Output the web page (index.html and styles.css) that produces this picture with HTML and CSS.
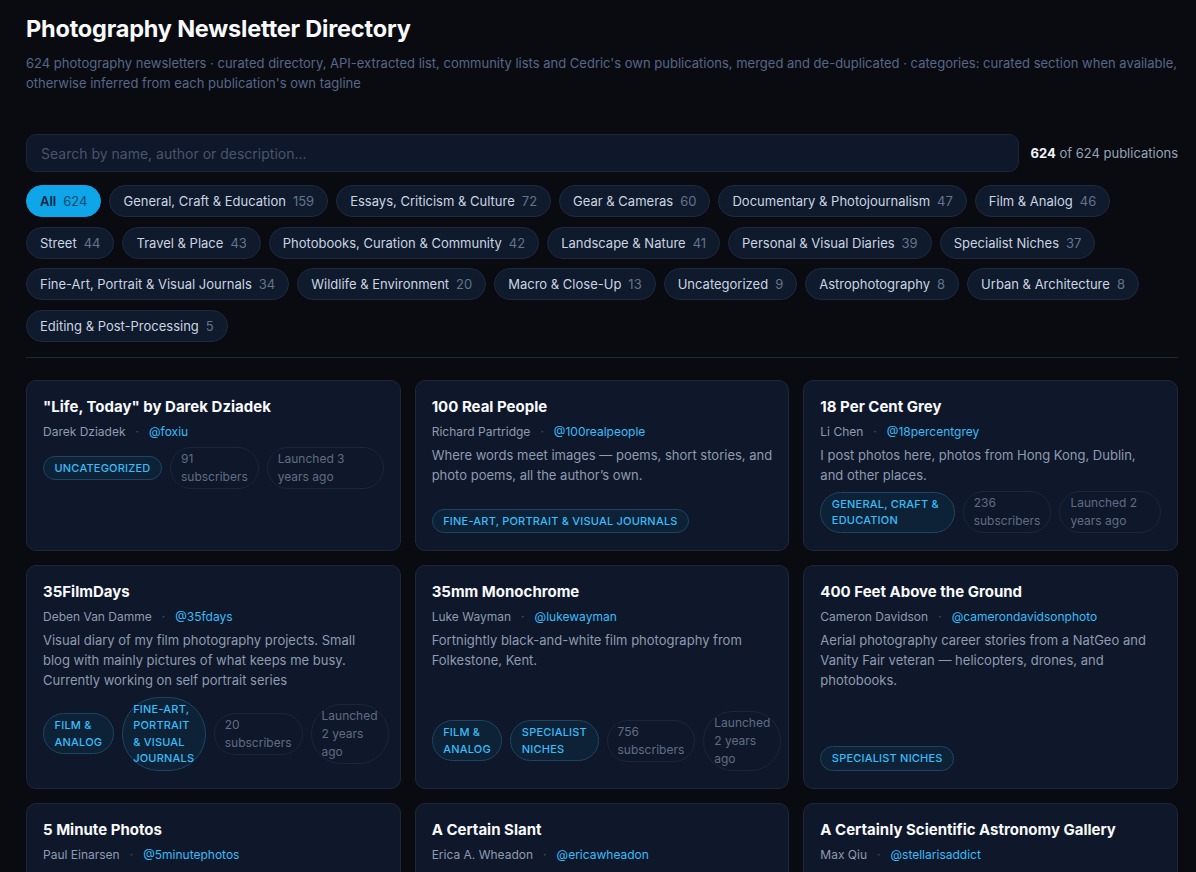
FILE: index.html
```html
<!DOCTYPE html>
<html lang="en">
<head>
<meta charset="utf-8">
<title>Photography Newsletter Directory</title>
<link rel="stylesheet" href="styles.css">
</head>
<body>
<div class="page">
  <header class="head">
    <h1 class="title">Photography Newsletter Directory</h1>
    <p class="subtitle">624 photography newsletters · curated directory, API-extracted list, community lists and Cedric's own publications, merged and de-duplicated · categories: curated section when available, otherwise inferred from each publication's own tagline</p>
  </header>

  <div class="searchbar">
    <div class="search">Search by name, author or description...</div>
    <div class="count"><b>624</b> of 624 publications</div>
  </div>

  <div class="chips">
    <span class="chip active">All <span class="n">624</span></span>
    <span class="chip">General, Craft &amp; Education <span class="n">159</span></span>
    <span class="chip">Essays, Criticism &amp; Culture <span class="n">72</span></span>
    <span class="chip">Gear &amp; Cameras <span class="n">60</span></span>
    <span class="chip">Documentary &amp; Photojournalism <span class="n">47</span></span>
    <span class="chip">Film &amp; Analog <span class="n">46</span></span>
    <span class="chip">Street <span class="n">44</span></span>
    <span class="chip">Travel &amp; Place <span class="n">43</span></span>
    <span class="chip">Photobooks, Curation &amp; Community <span class="n">42</span></span>
    <span class="chip">Landscape &amp; Nature <span class="n">41</span></span>
    <span class="chip">Personal &amp; Visual Diaries <span class="n">39</span></span>
    <span class="chip">Specialist Niches <span class="n">37</span></span>
    <span class="chip">Fine-Art, Portrait &amp; Visual Journals <span class="n">34</span></span>
    <span class="chip">Wildlife &amp; Environment <span class="n">20</span></span>
    <span class="chip">Macro &amp; Close-Up <span class="n">13</span></span>
    <span class="chip">Uncategorized <span class="n">9</span></span>
    <span class="chip">Astrophotography <span class="n">8</span></span>
    <span class="chip">Urban &amp; Architecture <span class="n">8</span></span>
    <span class="chip">Editing &amp; Post-Processing <span class="n">5</span></span>
  </div>

  <hr class="divider">

  <div class="grid">
    <article class="card">
      <h2 class="name">"Life, Today" by Darek Dziadek</h2>
      <div class="meta"><span class="author">Darek Dziadek</span><span class="sep">·</span><span class="handle">@foxiu</span></div>
      <div class="tags">
        <span class="tag">Uncategorized</span>
        <span class="stat">91 subscribers</span>
        <span class="stat">Launched 3 years ago</span>
      </div>
    </article>

    <article class="card">
      <h2 class="name">100 Real People</h2>
      <div class="meta"><span class="author">Richard Partridge</span><span class="sep">·</span><span class="handle">@100realpeople</span></div>
      <p class="desc">Where words meet images — poems, short stories, and photo poems, all the author’s own.</p>
      <div class="tags">
        <span class="tag">Fine-Art, Portrait &amp; Visual Journals</span>
      </div>
    </article>

    <article class="card">
      <h2 class="name">18 Per Cent Grey</h2>
      <div class="meta"><span class="author">Li Chen</span><span class="sep">·</span><span class="handle">@18percentgrey</span></div>
      <p class="desc">I post photos here, photos from Hong Kong, Dublin, and other places.</p>
      <div class="tags">
        <span class="tag">General, Craft &amp; Education</span>
        <span class="stat">236 subscribers</span>
        <span class="stat">Launched 2 years ago</span>
      </div>
    </article>

    <article class="card">
      <h2 class="name">35FilmDays</h2>
      <div class="meta"><span class="author">Deben Van Damme</span><span class="sep">·</span><span class="handle">@35fdays</span></div>
      <p class="desc">Visual diary of my film photography projects. Small blog with mainly pictures of what keeps me busy. Currently working on self portrait series</p>
      <div class="tags">
        <span class="tag">Film &amp; Analog</span>
        <span class="tag">Fine-Art, Portrait &amp; Visual Journals</span>
        <span class="stat">20 subscribers</span>
        <span class="stat">Launched 2 years ago</span>
      </div>
    </article>

    <article class="card">
      <h2 class="name">35mm Monochrome</h2>
      <div class="meta"><span class="author">Luke Wayman</span><span class="sep">·</span><span class="handle">@lukewayman</span></div>
      <p class="desc">Fortnightly black-and-white film photography from Folkestone, Kent.</p>
      <div class="tags">
        <span class="tag">Film &amp; Analog</span>
        <span class="tag">Specialist Niches</span>
        <span class="stat">756 subscribers</span>
        <span class="stat">Launched 2 years ago</span>
      </div>
    </article>

    <article class="card">
      <h2 class="name">400 Feet Above the Ground</h2>
      <div class="meta"><span class="author">Cameron Davidson</span><span class="sep">·</span><span class="handle">@camerondavidsonphoto</span></div>
      <p class="desc">Aerial photography career stories from a NatGeo and Vanity Fair veteran — helicopters, drones, and photobooks.</p>
      <div class="tags">
        <span class="tag">Specialist Niches</span>
      </div>
    </article>

    <article class="card">
      <h2 class="name">5 Minute Photos</h2>
      <div class="meta"><span class="author">Paul Einarsen</span><span class="sep">·</span><span class="handle">@5minutephotos</span></div>
      <p class="desc">Quick photography tips and ideas you can read in five minutes.</p>
    </article>

    <article class="card">
      <h2 class="name">A Certain Slant</h2>
      <div class="meta"><span class="author">Erica A. Wheadon</span><span class="sep">·</span><span class="handle">@ericawheadon</span></div>
      <p class="desc">Photographs and short essays about seeing things at a certain slant.</p>
    </article>

    <article class="card">
      <h2 class="name">A Certainly Scientific Astronomy Gallery</h2>
      <div class="meta"><span class="author">Max Qiu</span><span class="sep">·</span><span class="handle">@stellarisaddict</span></div>
      <p class="desc">Astrophotography from the backyard and beyond.</p>
    </article>
  </div>
</div>
</body>
</html>
```

FILE: styles.css
```css
* { box-sizing: border-box; }

html, body {
  margin: 0;
  padding: 0;
  background: #0a0b10;
  color: #e2e8f0;
  font-family: Inter, "Noto Sans", "Liberation Sans", sans-serif;
}

.page {
  width: 1152px;
  margin-left: 26px;
  padding-top: 14px;
}

.title {
  margin: 0;
  font-size: 23.5px;
  line-height: 30px;
  font-weight: 700;
  color: #f8fafc;
  letter-spacing: -0.2px;
}

.subtitle {
  margin: 9px 0 0;
  font-size: 13px;
  line-height: 20px;
  color: #56678a;
}

.searchbar {
  display: flex;
  align-items: center;
  gap: 12px;
  margin-top: 41px;
}

.search {
  flex: 1;
  height: 38px;
  border: 1px solid #1c2638;
  border-radius: 10px;
  background: #0f172a;
  padding: 0 14px;
  display: flex;
  align-items: center;
  font-size: 14px;
  color: #48556b;
}

.count {
  font-size: 13px;
  color: #94a3b8;
  white-space: nowrap;
}
.count b { color: #f1f5f9; font-weight: 700; }

.chips {
  display: flex;
  flex-wrap: wrap;
  gap: 9.7px 8px;
  margin-top: 13px;
}

.chip {
  height: 32px;
  display: inline-flex;
  align-items: center;
  padding: 0 13px;
  border-radius: 999px;
  background: #0f1a2d;
  border: 1px solid #1c2a40;
  font-size: 13px;
  color: #cbd5e1;
  white-space: nowrap;
}
.chip .n { color: #64748b; margin-left: 7px; }

.chip.active {
  background: #0ea5e9;
  border-color: #0ea5e9;
  color: #06243a;
  font-weight: 600;
}
.chip.active .n { color: #0b4a6e; font-weight: 400; }

.divider {
  border: 0;
  border-top: 1px solid #1e2738;
  margin: 15px 0 22px;
}

.grid {
  display: grid;
  grid-template-columns: repeat(3, minmax(0, 1fr));
  gap: 14px 14px;
}

.card {
  display: flex;
  flex-direction: column;
  background: #0f172a;
  border: 1px solid #1d2739;
  border-radius: 10px;
  padding: 16px 16px 17px;
  min-width: 0;
}

.name {
  margin: 0;
  font-size: 15px;
  line-height: 20px;
  font-weight: 700;
  color: #f8fafc;
}

.meta {
  margin-top: 6px;
  font-size: 12px;
  line-height: 18px;
  display: flex;
  align-items: center;
}
.author { color: #8e9bb0; }
.sep { color: #475569; margin: 0 10px; }
.handle { color: #38bdf8; }

.desc {
  flex: 1;
  margin: 5px 0 0;
  font-size: 13px;
  line-height: 19.7px;
  color: #8e9bb0;
}

.tags {
  display: flex;
  align-items: center;
  gap: 8px;
  margin-top: 6px;
}

.tag {
  border-radius: 999px;
  padding: 3px 10.5px;
  border: 1px solid #1d4563;
  background: #0d2237;
  color: #38bdf8;
  font-size: 11px;
  line-height: 16.5px;
  font-weight: 500;
  text-transform: uppercase;
  letter-spacing: 0.2px;
}

.stat {
  border-radius: 999px;
  padding: 2px 10px;
  border: 1px solid #1c2638;
  color: #5f6d84;
  font-size: 12px;
  line-height: 18px;
}
```
